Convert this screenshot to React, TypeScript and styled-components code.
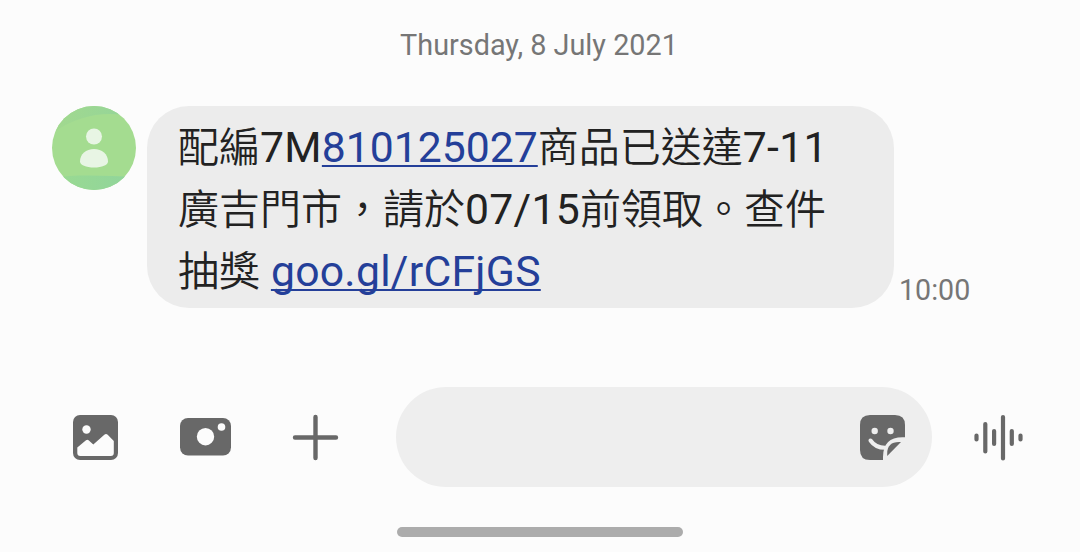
import React from 'react'
import styled, { createGlobalStyle } from 'styled-components'

const GlobalStyle = createGlobalStyle`
  * {
    box-sizing: border-box;
  }
  body {
    margin: 0;
    background: #fcfcfc;
    font-family: Roboto, 'Noto Sans CJK TC', sans-serif;
  }
`

const Screen = styled.div`
  width: 1080px;
  height: 552px;
  display: flex;
  flex-direction: column;
  overflow: hidden;
  background: #fcfcfc;
`

const DateLabel = styled.div`
  height: 106px;
  padding: 25px 2px 0 0;
  font-size: 28.8px;
  line-height: 40px;
  text-align: center;
  color: #767676;
`

const MessageRow = styled.div`
  height: 202px;
  padding-left: 52px;
  display: flex;
`

const Avatar = styled.div`
  width: 84px;
  height: 84px;
  margin-right: 11px;
  flex-shrink: 0;
  border-radius: 50%;
  overflow: hidden;
`

const Bubble = styled.div`
  width: 747px;
  padding: 7px 0 0 31px;
  border-radius: 42px;
  background: #ececec;
  color: #222222;
`

const TextLine = styled.div`
  height: 62px;
  font-family: 'Noto Sans CJK TC', sans-serif;
  font-size: 41px;
  font-weight: 350;
  line-height: 62px;
  white-space: pre;
`

const Latin = styled.span`
  font-family: Roboto, sans-serif;
  font-size: 42.7px;
  font-weight: 400;
  letter-spacing: 0.3px;
  line-height: 1;
`

const Link = styled.a<{ $spacing?: number }>`
  font-family: Roboto, sans-serif;
  font-size: 42.7px;
  font-weight: 400;
  letter-spacing: ${({ $spacing = 0 }) => $spacing}px;
  line-height: 1;
  color: #243f99;
  text-decoration: underline;
  text-decoration-thickness: 2px;
  text-decoration-skip-ink: none;
  text-underline-offset: 3px;
`

const Time = styled.div`
  align-self: flex-end;
  margin-left: 5px;
  font-size: 28.6px;
  line-height: 36px;
  color: #767676;
`

const Composer = styled.div`
  height: 100px;
  margin-top: 79px;
  display: flex;
  align-items: center;
`

const IconButton = styled.button<{ $left: number }>`
  width: 60px;
  height: 60px;
  margin: 0 0 0 ${({ $left }) => $left}px;
  padding: 0;
  flex-shrink: 0;
  border: 0;
  background: none;
  color: #686868;

  svg {
    display: block;
  }
`

const InputField = styled.div`
  width: 536px;
  height: 100px;
  margin-left: 51px;
  display: flex;
  align-items: center;
  border-radius: 50px;
  background: #eeeeee;
`

const HomeIndicator = styled.div`
  width: 286px;
  height: 10px;
  margin: 40.4px 0 0 397px;
  border-radius: 5px;
  background: #acacac;
`

const PersonIcon = () => (
  <svg width="84" height="84" viewBox="0 0 84 84">
    <defs>
      <linearGradient id="top" x1="0" x2="1">
        <stop offset="0" stopColor="#a2d98e" />
        <stop offset="1" stopColor="#93d49a" />
      </linearGradient>
      <linearGradient id="bottom" x1="0" x2="1">
        <stop offset="0" stopColor="#9ada91" />
        <stop offset="1" stopColor="#90d49c" />
      </linearGradient>
    </defs>
    <rect width="84" height="84" fill="#a4dc90" />
    <path d="M0 0H84V12C58 4 28 8 2 26Z" fill="url(#top)" />
    <path d="M0 72C24 68 56 70 84 71V84H0Z" fill="url(#bottom)" />
    <circle cx="42" cy="30.5" r="8" fill="#e8f5e4" />
    <path d="M28 55.5C28 48 34 43 42 43S56 48 56 55.5C56 59 50 61.5 42 61.5S28 59 28 55.5Z" fill="#e8f5e4" />
  </svg>
)

const GalleryIcon = () => (
  <svg width="60" height="60" viewBox="0 0 60 60">
    <rect x="8" y="8" width="45" height="45" rx="7" fill="currentColor" />
    <circle cx="21.5" cy="22.5" r="4.2" fill="#fcfcfc" />
    <path
      d="M12.3 40.5L21 33.2Q22.3 32.2 23.6 33.2L28.3 37.5L39.3 27.8Q41 26.3 42.7 27.8L48.8 34V46Q48.8 49 45.8 49H15.3Q12.3 49 12.3 46Z"
      fill="#fcfcfc"
    />
  </svg>
)

const CameraIcon = () => (
  <svg width="60" height="60" viewBox="0 0 60 60">
    <rect x="5" y="11" width="51" height="37.5" rx="8" fill="currentColor" />
    <circle cx="30.5" cy="29.7" r="8.7" fill="#fcfcfc" />
    <circle cx="46.5" cy="20" r="3.8" fill="#fcfcfc" />
  </svg>
)

const PlusIcon = () => (
  <svg width="60" height="60" viewBox="0 0 60 60">
    <path d="M30.5 10V51M10 30.5H51" stroke="currentColor" strokeWidth="4.4" strokeLinecap="round" />
  </svg>
)

const StickerIcon = () => (
  <svg width="60" height="60" viewBox="0 0 60 60">
    <path
      d="M20 8H45Q55 8 55 18V30.2H52.5Q33 30.2 33 50V53H20Q10 53 10 43V18Q10 8 20 8Z"
      fill="currentColor"
    />
    <circle cx="24.7" cy="24" r="3.2" fill="#eeeeee" />
    <circle cx="40.5" cy="24" r="3.2" fill="#eeeeee" />
    <path d="M20.5 33.5Q25.5 40.8 35 40.8" fill="none" stroke="#eeeeee" strokeWidth="4" strokeLinecap="round" />
    <path d="M37.2 49V46.5Q37.2 35 49 35H51Z" fill="currentColor" />
  </svg>
)

const VoiceIcon = () => (
  <svg width="60" height="60" viewBox="0 0 60 60">
    <path
      d="M6.5 28.5V32.5M15.3 17V44.5M24.1 24V37M33 10V51.5M41.8 24V37M50.5 28.5V32.5"
      stroke="currentColor"
      strokeWidth="4.2"
      strokeLinecap="round"
    />
  </svg>
)

const App: React.FC = () => {
  return (
    <>
      <GlobalStyle />
      <Screen>
        <DateLabel>Thursday, 8 July 2021</DateLabel>
        <MessageRow>
          <Avatar>
            <PersonIcon />
          </Avatar>
          <Bubble>
            <TextLine>
              配編<Latin>7M</Latin>
              <Link>810125027</Link>商品已送達<Latin>7-11</Latin>
            </TextLine>
            <TextLine>
              廣吉門市，請於<Latin>07/15</Latin>前領取。查件
            </TextLine>
            <TextLine>
              抽獎<Latin> </Latin>
              <Link $spacing={0.27}>goo.gl/rCFjGS</Link>
            </TextLine>
          </Bubble>
          <Time>10:00</Time>
        </MessageRow>
        <Composer>
          <IconButton $left={65}>
            <GalleryIcon />
          </IconButton>
          <IconButton $left={50}>
            <CameraIcon />
          </IconButton>
          <IconButton $left={50}>
            <PlusIcon />
          </IconButton>
          <InputField>
            <IconButton $left={454}>
              <StickerIcon />
            </IconButton>
          </InputField>
          <IconButton $left={38}>
            <VoiceIcon />
          </IconButton>
        </Composer>
        <HomeIndicator />
      </Screen>
    </>
  )
}

export default App
